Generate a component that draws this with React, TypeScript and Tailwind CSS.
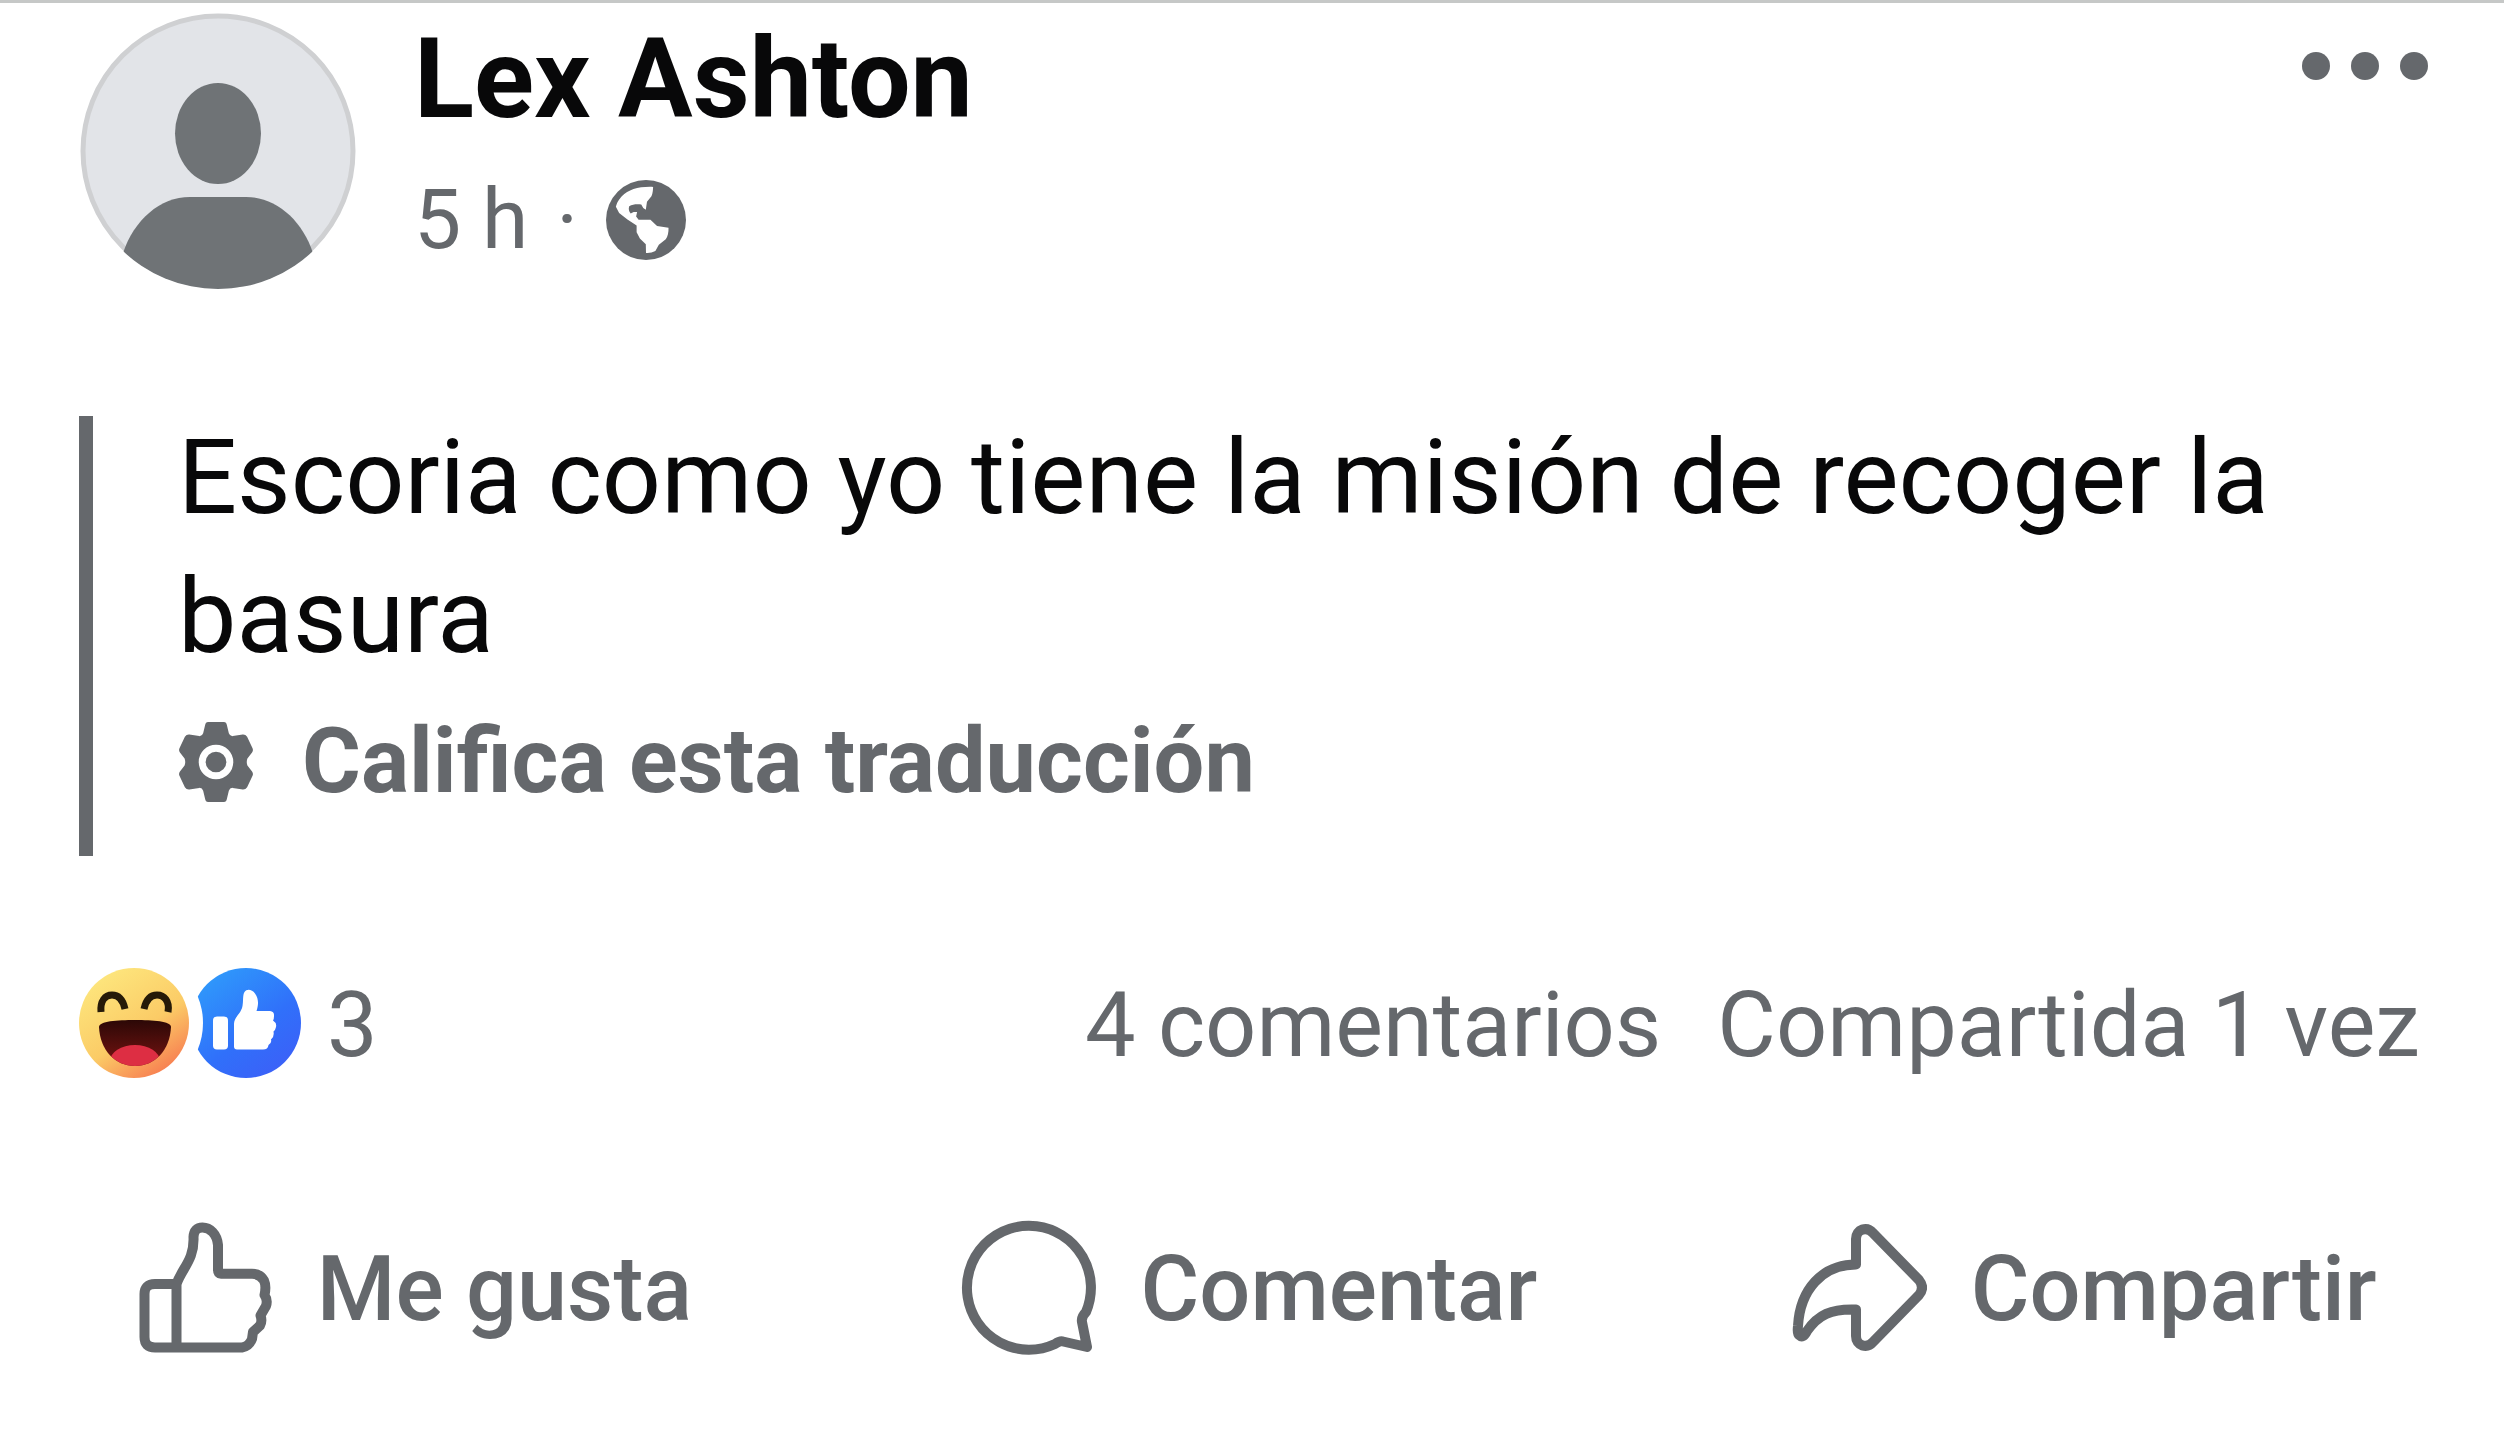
import type { ReactNode } from "react";

type ActionButtonProps = {
	icon: ReactNode;
	label: string;
};

function Avatar() {
	return (
		<svg aria-hidden="true" className="size-69 shrink-0" viewBox="0 0 276 276">
			<defs>
				<clipPath id="avatar-clip">
					<circle cx="138" cy="138" r="138" />
				</clipPath>
			</defs>
			<circle cx="138" cy="138" fill="#e2e4e8" r="135" stroke="#cfd0d2" strokeWidth="5" />
			<g clipPath="url(#avatar-clip)" fill="#6f7376">
				<ellipse cx="138" cy="120.5" rx="43" ry="50.5" />
				<path d="M43 240C54 207 80 184 110 184H166C196 184 222 207 233 240V276H43Z" />
			</g>
		</svg>
	);
}

function GlobeIcon() {
	return (
		<svg aria-hidden="true" className="size-20" viewBox="0 0 81 81">
			<circle cx="40.5" cy="40.5" fill="#65686c" r="40.5" />
			<path
				d="M47.7 7C47.5 12 47 14 46 16.5L41.5 22L40.3 30L37.7 28.3L35.7 24.8C32 24.3 27 24.3 23.5 26.5C22.5 29 23.3 32 25 34L28 32.5H31.5L30.5 37L33 40.3H45L51.7 46.5L63.3 48.3C63.5 53 62.5 57 60.5 60L53.5 65.5L50 72C47 73.5 44 74 40.5 73.8L40.3 65L34.3 59.3L31 53V46L21.7 40L13.3 33.5L10 27C11.5 22 13 20 16 16.5C23 9.5 33 6.5 47.7 7Z"
				fill="#fff"
			/>
		</svg>
	);
}

function GearIcon() {
	return (
		<svg aria-hidden="true" className="h-20 w-19 shrink-0" viewBox="0 0 76 81">
			<path
				d="M30 0H46Q48.500 0 49 3L51 11.500Q52 14.500 55 14.300L65 12.700Q68 12.500 69.500 15L75 26.500Q76 29 74.500 31L69.800 37Q68.500 40.500 69.800 44L74.500 50Q76 52 75 54.500L69.500 66Q68 68.500 65 68.300L55 66.700Q52 66.500 51 69.500L49 78Q48.500 81 46 81H30Q27.500 81 27 78L25 69.500Q24 66.500 21 66.700L11 68.300Q8 68.500 6.500 66L1 54.500Q0 52 1.500 50L6.200 44Q7.500 40.500 6.200 37L1.500 31Q0 29 1 26.500L6.500 15Q8 12.500 11 12.700L21 14.300Q24 14.500 25 11.500L27 3Q27.500 0 30 0Z"
				fill="#65686c"
			/>
			<circle cx="38" cy="40.5" fill="#65686c" r="14" stroke="#fff" strokeWidth="7" />
		</svg>
	);
}

function HahaReaction() {
	return (
		<svg aria-hidden="true" className="size-[110px]" viewBox="0 0 110 110">
			<defs>
				<linearGradient id="haha-face" x1="0.25" x2="0.85" y1="0.05" y2="0.95">
					<stop offset="0" stopColor="#fde57c" />
					<stop offset="0.55" stopColor="#fbcb66" />
					<stop offset="1" stopColor="#f7774f" />
				</linearGradient>
				<linearGradient id="haha-mouth" x1="0" x2="0" y1="0" y2="1">
					<stop offset="0" stopColor="#2a0806" />
					<stop offset="1" stopColor="#7a1412" />
				</linearGradient>
				<clipPath id="haha-mouth-clip">
					<path d="M20 59C20 53 38 52 56 52S92 53 92 59C91 82 76 98 56 98S21 82 20 59Z" />
				</clipPath>
			</defs>
			<circle cx="55" cy="55" fill="url(#haha-face)" r="55" />
			<g fill="none" stroke="#261a08" strokeWidth="7">
				<path d="M22 44C21 33 26 27 33 27S44 32 46 41" />
				<path d="M65 41C67 32 71 27 78 27S91 33 89 44" />
			</g>
			<g clipPath="url(#haha-mouth-clip)">
				<rect fill="url(#haha-mouth)" height="48" width="74" x="19" y="51" />
				<ellipse cx="56" cy="93" fill="#dd2e43" rx="25" ry="16" />
			</g>
		</svg>
	);
}

function LikeReaction() {
	return (
		<svg aria-hidden="true" className="size-[110px]" viewBox="0 0 110 110">
			<defs>
				<linearGradient id="like-fill" x1="0.2" x2="0.8" y1="0.1" y2="0.9">
					<stop offset="0" stopColor="#2f96fb" />
					<stop offset="0.6" stopColor="#3070fa" />
					<stop offset="1" stopColor="#3a62f8" />
				</linearGradient>
				{/* bite left by the neighbouring reaction */}
				<mask id="like-bite">
					<rect fill="#fff" height="110" width="110" />
					<circle cx="-58" cy="55" fill="#000" r="70" />
				</mask>
			</defs>
			<circle cx="55" cy="55" fill="url(#like-fill)" mask="url(#like-bite)" r="55" />
			<g fill="#fff">
				<rect height="33" rx="4" width="15" x="22" y="48.500" />
				<path d="M46 81.500Q43 81.500 43 78.500V56C43 49 50 46 51.500 38C52.500 33 51.500 27 53.500 24C56 20.500 61 21.500 64 25.500C68 31 67.500 37 65.500 43H79Q83.500 43.500 83 48Q83 51 82 52.500Q86 55 85 59Q84.500 62 82.500 63.500Q83.500 69 80 71.500Q81 75 77.500 77Q77 81.500 72 81.500Z" />
			</g>
		</svg>
	);
}

function LikeIcon() {
	return (
		<svg
			aria-hidden="true"
			className="size-34 shrink-0"
			fill="none"
			stroke="currentColor"
			strokeLinejoin="round"
			strokeWidth="10"
			viewBox="0 0 136 136"
		>
			<path d="M39.500 64H18Q7.500 64 7.500 74V117Q7.500 127.500 18 127.500H105Q112 126.500 115 119L116 112L123 105.500Q125.500 101 123.500 95.500L129 86Q131 80 127.500 75Q129.500 66 127 60.500Q123 53.700 115 53.700H84Q81 53.700 81 50V25C80 14 73 7.500 65.500 7.500Q57 7.500 56.500 17C57.500 40 45 48 39.500 64V127.500" />
		</svg>
	);
}

function CommentIcon() {
	return (
		<svg
			aria-hidden="true"
			className="size-34 shrink-0"
			fill="none"
			stroke="currentColor"
			strokeLinejoin="round"
			strokeWidth="10"
			viewBox="0 0 136 136"
		>
			<path d="M94 124A62 62 0 1 1 125 92Q120 97 121 102L126 127L102 121.500Q99 120.500 94 124Z" />
		</svg>
	);
}

function ShareIcon() {
	return (
		<svg
			aria-hidden="true"
			className="size-34 shrink-0"
			fill="none"
			stroke="currentColor"
			strokeLinejoin="round"
			strokeWidth="10"
			viewBox="0 0 136 136"
		>
			<path d="M65 44.500V19C65 9 76 6 82 13L128 60Q134 67.500 128 75L82 122C76 129 65 126 65 116V89.500C40 88.500 27 95 16 111Q12 119 8 115Q6 114 7 106C9 70 31 44.500 65 44.500Z" />
		</svg>
	);
}

function ActionButton({ icon, label }: ActionButtonProps) {
	return (
		<button
			className="flex cursor-pointer items-center justify-center gap-11 pr-1.5 font-medium text-[90px] leading-none"
			type="button"
		>
			{icon}
			<span className="pt-1">{label}</span>
		</button>
	);
}

export default function App() {
	return (
		<article className="min-h-screen border-[#c6c8c7] border-t-3 bg-white pt-2.5 font-[Roboto,sans-serif] text-[#65686c]">
			<header className="flex items-start gap-[58px] pr-19 pl-20">
				<Avatar />
				<div className="grow pt-0.5">
					<h1 className="font-bold text-[#080809] text-[111px] leading-32">Lex Ashton</h1>
					<div className="mt-[21px] flex items-center gap-7 text-[84px] leading-28">
						<span>5 h</span>
						<span>·</span>
						<GlobeIcon />
					</div>
				</div>
				<button
					aria-label="Más opciones"
					className="flex cursor-pointer gap-[21px] pt-[39px]"
					type="button"
				>
					<span className="size-7 rounded-full bg-[#65686c]" />
					<span className="size-7 rounded-full bg-[#65686c]" />
					<span className="size-7 rounded-full bg-[#65686c]" />
				</button>
			</header>

			<blockquote className="mt-[127px] mr-20 ml-[79px] flex flex-col items-start border-[#65686c] border-l-14 pb-[30px] pl-[85px]">
				<p className="-mt-2 text-[#080809] text-[104px] leading-[139px]">
					Escoria como yo tiene la misión de recoger la basura
				</p>
				<button
					className="mt-3 flex cursor-pointer items-center gap-12 font-bold text-[90px] leading-32"
					type="button"
				>
					<GearIcon />
					Califica esta traducción
				</button>
			</blockquote>

			<div className="mt-28 flex items-center justify-between pr-21 pl-[79px] text-[90px] leading-none">
				<div className="flex items-center gap-0.5">
					<HahaReaction />
					<LikeReaction />
					<span className="ml-6 pt-1.5">3</span>
				</div>
				<div className="flex gap-14 pt-1.5">
					<a href="#comentarios">4 comentarios</a>
					<a href="#compartida">Compartida 1 vez</a>
				</div>
			</div>

			<div className="mt-[142px] grid grid-cols-3">
				<ActionButton icon={<LikeIcon />} label="Me gusta" />
				<ActionButton icon={<CommentIcon />} label="Comentar" />
				<ActionButton icon={<ShareIcon />} label="Compartir" />
			</div>
		</article>
	);
}
